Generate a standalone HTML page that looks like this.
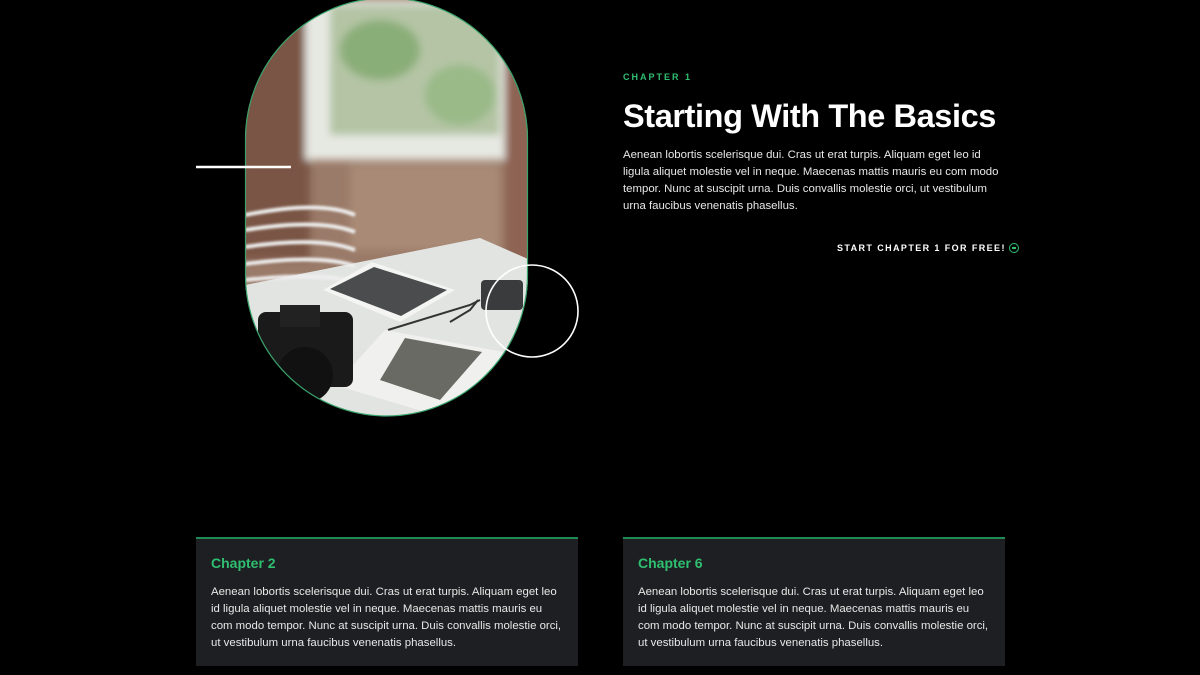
<!DOCTYPE html>
<html><head><meta charset="utf-8">
<style>
*{margin:0;padding:0;box-sizing:border-box}
html,body{width:1200px;height:675px;background:#000;overflow:hidden;font-family:"Liberation Sans",sans-serif;color:#fff}
.abs{position:absolute}
.kick{left:623px;top:72px;font-size:9px;font-weight:bold;letter-spacing:2px;color:#2fbf71}
h1{position:absolute;left:623px;top:98px;font-size:32.5px;font-weight:bold;letter-spacing:-0.4px;white-space:nowrap}
.p{left:623px;top:147px;font-size:11.4px;line-height:17px;color:#e8e8e8;white-space:nowrap}
.cta{left:837px;top:243px;font-size:9px;font-weight:bold;letter-spacing:1.4px;white-space:nowrap}
.cta span{display:inline-block;width:10px;height:10px;border:1.5px solid #2fbf71;border-radius:50%;vertical-align:-2px;margin-left:3px;position:relative}
.cta span:after{content:"";position:absolute;left:2px;top:3px;width:4px;height:1.5px;background:#2fbf71}
.card{top:537px;width:382px;height:129px;background:#1e1f22;border-top:2px solid #1f8a55;padding:16px 15px}
.card h3{font-size:14px;color:#2fbf71;font-weight:bold;margin-bottom:13px}
.card p{font-size:11.4px;line-height:17px;color:#e8e8e8;white-space:nowrap}
</style></head><body>
<svg class="abs" style="left:0;top:0" width="1200" height="675">
<defs>
<clipPath id="pill"><rect x="245" y="-2" width="283" height="418" rx="141.5"/></clipPath>
<filter id="bl"><feGaussianBlur stdDeviation="4"/></filter>
<filter id="bl2"><feGaussianBlur stdDeviation="1.2"/></filter>
</defs>
<g clip-path="url(#pill)">
<rect x="240" y="0" width="300" height="420" fill="#9a7a68"/>
<g filter="url(#bl)">
<rect x="240" y="0" width="70" height="260" fill="#7a5444"/>
<rect x="305" y="0" width="205" height="160" fill="#e6e8e2"/>
<rect x="330" y="5" width="170" height="130" fill="#b4c4a4"/>
<ellipse cx="380" cy="50" rx="40" ry="30" fill="#8aae78"/>
<ellipse cx="460" cy="95" rx="35" ry="30" fill="#9aba88"/>
<rect x="350" y="165" width="150" height="85" fill="#a98a76"/>
<rect x="505" y="0" width="30" height="270" fill="#8e6452"/>
</g>
<polygon points="245,285 480,238 535,262 535,420 245,420" fill="#e2e4e2"/>
<g stroke="#eee" stroke-width="4" fill="none" filter="url(#bl2)">
<path d="M245 215 Q320 200 355 215"/><path d="M245 230 Q320 218 355 232"/><path d="M245 247 Q320 236 355 250"/><path d="M245 264 Q320 254 355 266"/><path d="M245 280 Q320 272 355 282"/>
</g>
<polygon points="323,290 372,262 455,290 400,322" fill="#f4f4f2"/>
<polygon points="330,289 374,267 447,290 401,316" fill="#4a4c4e"/>
<rect x="481" y="280" width="42" height="30" rx="4" fill="#3a3b3d"/>
<path d="M388 330 L470 305 L480 300" stroke="#333" stroke-width="2" fill="none"/>
<path d="M450 322 L470 310 L478 300" stroke="#333" stroke-width="2" fill="none"/>
<polygon points="335,385 385,330 520,355 445,418" fill="#f0f0ee"/>
<polygon points="380,380 405,338 482,352 440,400" fill="#6a6a64"/>
<rect x="258" y="312" width="95" height="75" rx="8" fill="#1a1a1a"/>
<rect x="280" y="305" width="40" height="22" fill="#222"/>
<circle cx="305" cy="375" r="28" fill="#111"/>
</g>
<rect x="245.5" y="-2" width="282" height="418" rx="141" fill="none" stroke="#3aa36b" stroke-width="1.2"/>
<line x1="196" y1="167" x2="291" y2="167" stroke="#fff" stroke-width="2.5"/>
<circle cx="532" cy="311" r="46" fill="none" stroke="#fff" stroke-width="1.6"/>
</svg>
<div class="abs kick">CHAPTER 1</div>
<h1>Starting With The Basics</h1>
<div class="abs p">Aenean lobortis scelerisque dui. Cras ut erat turpis. Aliquam eget leo id<br>ligula aliquet molestie vel in neque. Maecenas mattis mauris eu com modo<br>tempor. Nunc at suscipit urna. Duis convallis molestie orci, ut vestibulum<br>urna faucibus venenatis phasellus.</div>
<div class="abs cta">START CHAPTER 1 FOR FREE!<span></span></div>
<div class="abs card" style="left:196px"><h3>Chapter 2</h3><p>Aenean lobortis scelerisque dui. Cras ut erat turpis. Aliquam eget leo<br>id ligula aliquet molestie vel in neque. Maecenas mattis mauris eu<br>com modo tempor. Nunc at suscipit urna. Duis convallis molestie orci,<br>ut vestibulum urna faucibus venenatis phasellus.</p></div>
<div class="abs card" style="left:623px"><h3>Chapter 6</h3><p>Aenean lobortis scelerisque dui. Cras ut erat turpis. Aliquam eget leo<br>id ligula aliquet molestie vel in neque. Maecenas mattis mauris eu<br>com modo tempor. Nunc at suscipit urna. Duis convallis molestie orci,<br>ut vestibulum urna faucibus venenatis phasellus.</p></div>
</body></html>
